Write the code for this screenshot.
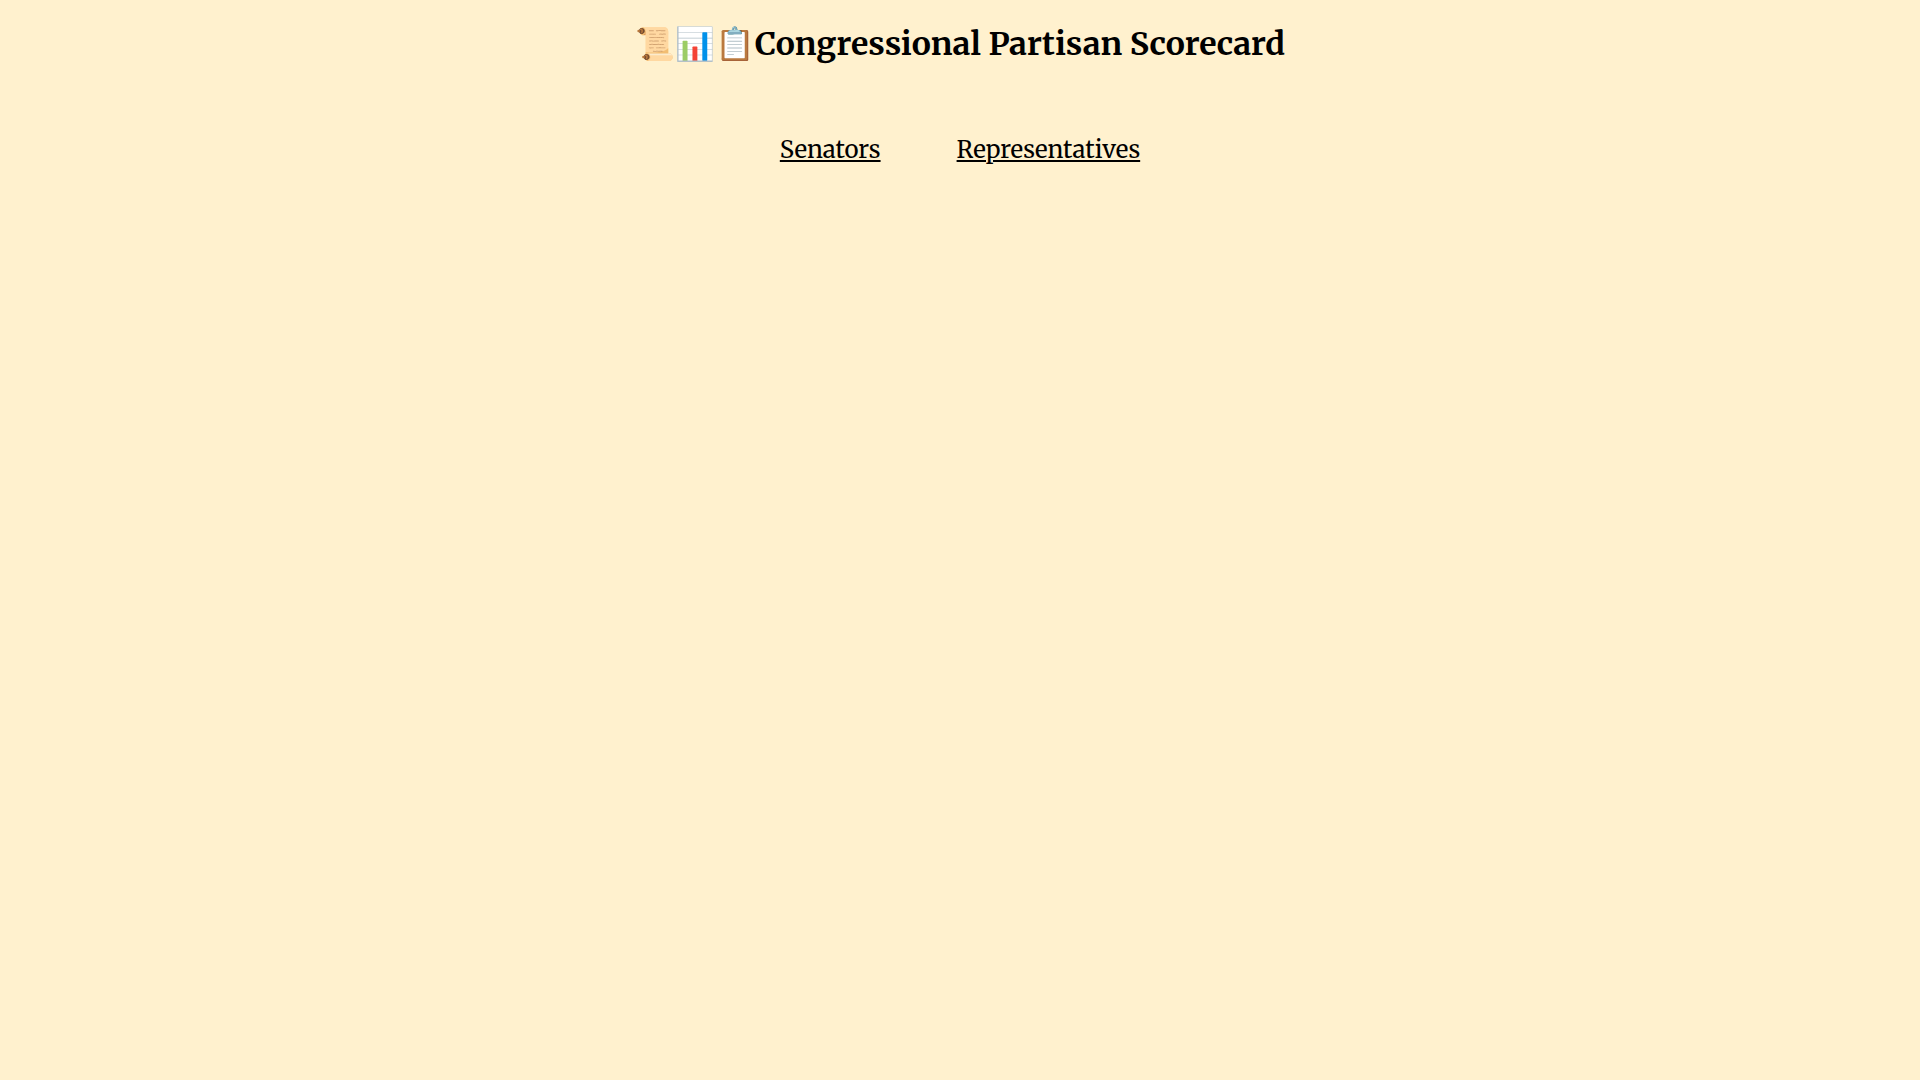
<main>
  <h1>📜📊📋Congressional Partisan Scorecard</h1>
  <nav>
    <a href="#senators">Senators</a>
    <a href="#representatives">Representatives</a>
  </nav>
</main>

<style>
  :global(body) {
    margin: 0;
    background: #fff1ce;
    color: #000;
  }
  main {
    display: flex;
    flex-direction: column;
    align-items: center;
    font-family: Merriweather, "Noto Serif", "Liberation Serif", serif;
  }
  h1 {
    margin: 22px 0 0;
    font-size: 32px;
    line-height: 44px;
  }
  nav {
    display: flex;
    gap: 76px;
    margin-top: 66px;
    font-size: 24px;
    line-height: 36px;
  }
  a {
    color: inherit;
  }
</style>
